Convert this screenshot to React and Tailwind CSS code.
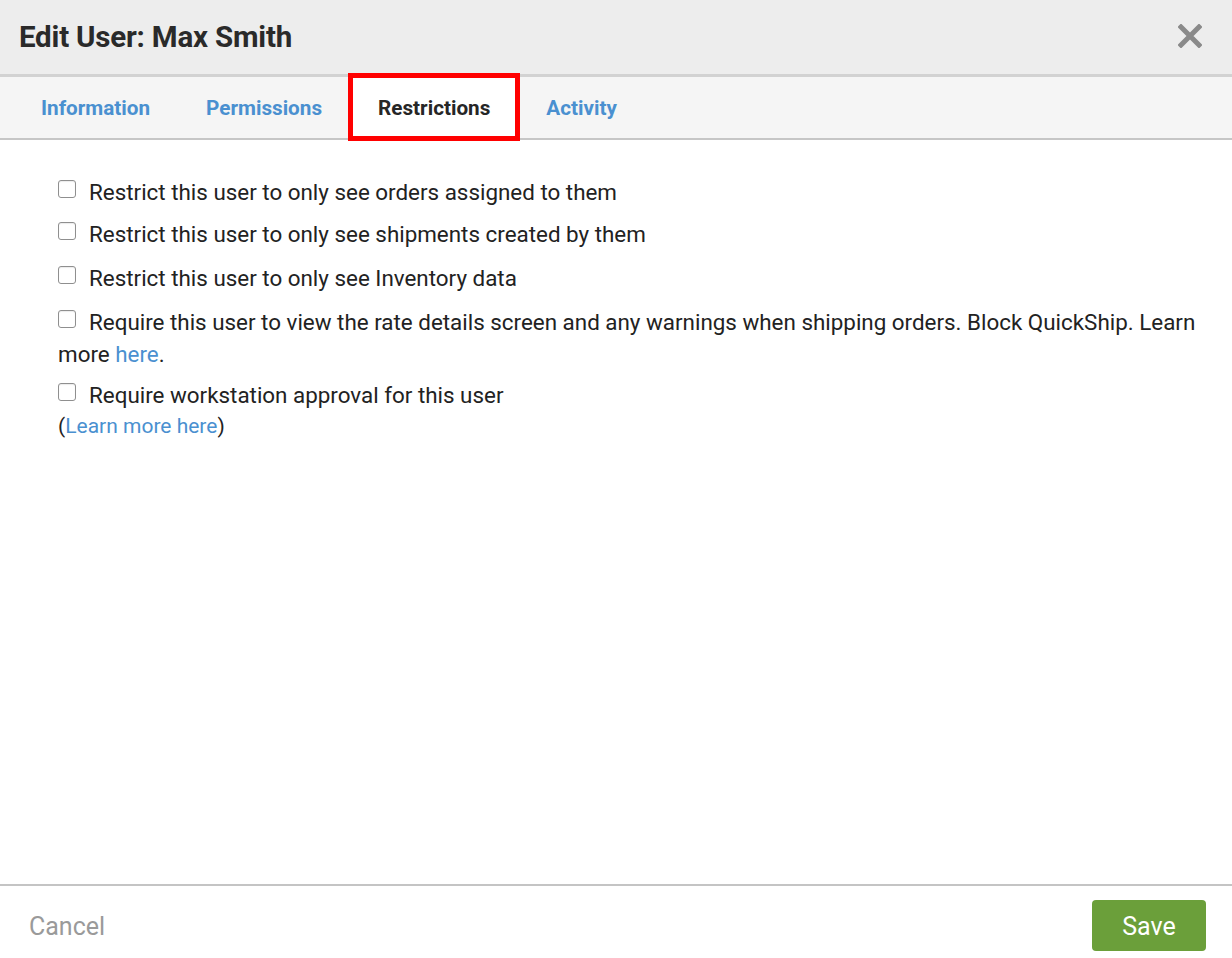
import React from "react"

const tabs = ["Information", "Permissions", "Restrictions", "Activity"]

function Box() {
  return (
    <span className="mr-[13px] inline-block h-[18px] w-[18px] rounded-[3px] border border-[#8f8f8f] bg-white align-[2px] shadow-[inset_0_1px_1px_rgba(0,0,0,0.08)]" />
  )
}

export default function App() {
  const active = "Restrictions"

  return (
    <div className="flex h-[958px] w-[1232px] flex-col bg-white font-['Roboto',sans-serif] text-[#222]">
      <div className="flex h-[74px] items-center justify-between bg-[#ededed] pl-[19px] pr-[30px]">
        <h1 className="text-[29.5px] font-bold tracking-[-0.2px] text-[#2a2a2a]">Edit User: Max Smith</h1>
        <svg width="24" height="24" viewBox="0 0 24 24" className="mt-[-3px]">
          <path d="M3 3L21 21M21 3L3 21" stroke="#8a8a8a" strokeWidth="5" strokeLinecap="square" />
        </svg>
      </div>
      <div className="h-[3px] bg-[#d2d2d2]" />

      <div className="flex h-[63px] items-stretch border-b-2 border-[#c6c6c6] bg-[#f5f5f5] pl-[13px]">
        {tabs.map((t) =>
          t === active ? (
            <div key={t} className="relative flex items-center border-r-2 border-[#d4d4d4] bg-white pl-7 pr-[26px] pt-[3px] text-[20.7px] font-bold text-[#262626]">
              {t}
              <div className="pointer-events-none absolute -bottom-[3px] -left-[2px] -right-[4px] -top-[4px] border-[5px] border-[#ff0000]" />
            </div>
          ) : (
            <div key={t} className="flex items-center px-7 pt-[3px] text-[20.7px] font-bold text-[#4a90d0]">
              {t}
            </div>
          )
        )}
      </div>

      <div className="flex-1 pl-[58px] pr-[28px] pt-[36px] text-[22.4px] leading-[32px]">
        <div className="mb-[10px]">
          <Box />
          Restrict this user to only see orders assigned to them
        </div>
        <div className="mb-[12px]">
          <Box />
          Restrict this user to only see shipments created by them
        </div>
        <div className="mb-[12px]">
          <Box />
          Restrict this user to only see Inventory data
        </div>
        <div className="mb-[10px]">
          <Box />
          Require this user to view the rate details screen and any warnings when shipping orders. Block QuickShip. Learn more{" "}
          <a className="text-[#4a90d0]">here</a>.
        </div>
        <div className="leading-[30px]">
          <Box />
          Require workstation approval for this user
          <br />
          <span className="text-[21px]">
            (<a className="text-[#4a90d0]">Learn more here</a>)
          </span>
        </div>
      </div>

      <div className="flex h-[74px] items-start justify-between border-t-2 border-[#c4c4c4] pl-[29px] pr-[26px] pt-[14px]">
        <button className="mt-[13px] text-[25px] leading-[28px] text-[#9a9a9a]">Cancel</button>
        <button className="h-[51px] w-[114px] rounded-[4px] bg-[#6b9f3a] pt-[3px] text-[25px] text-white">Save</button>
      </div>
    </div>
  )
}
